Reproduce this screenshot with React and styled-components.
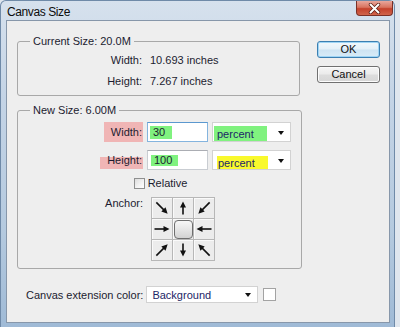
import React from "react";
import styled, { createGlobalStyle } from "styled-components";

const Global = createGlobalStyle`
  html, body { margin: 0; padding: 0; background: #dfe6ee; }
  body {
    font-family: "Liberation Sans", Arial, sans-serif;
    font-size: 11px;
    color: #1c1c30;
  }
`;

const Window = styled.div`
  width: 395px;
  height: 327px;
  box-sizing: border-box;
  display: flex;
  flex-direction: column;
  background: linear-gradient(180deg, #d6e1ed 0%, #c4d4e6 30%, #b5cadf 70%, #9fbad6 100%);
  border: 1px solid #6f8aa8;
  border-bottom: none;
  border-radius: 6px 6px 0 0;
  padding: 0 4px 4px 5px;
`;

const TitleBar = styled.div`
  height: 19px;
  display: flex;
  justify-content: space-between;
  align-items: flex-start;
  flex: none;
`;

const Title = styled.div`
  margin: 5px 0 0 1px;
  line-height: 13px;
  font-size: 12px;
  letter-spacing: -0.4px;
  color: #0c0c0c;
`;

const CloseBtn = styled.div`
  width: 37px;
  height: 15px;
  margin-right: -3px;
  box-sizing: border-box;
  border: 1px solid #7b3026;
  border-top: none;
  border-radius: 0 0 4px 4px;
  background: linear-gradient(180deg, #e8a79c 0%, #d8735f 45%, #c4412b 55%, #d0644b 100%);
  display: flex;
  align-items: center;
  justify-content: center;
`;

const Client = styled.div`
  flex: 1;
  display: flex;
  background: #eeeeee;
  border: 1px solid #8797aa;
`;

const Main = styled.div`
  width: 293px;
  padding: 14px 0 0 10px;
  box-sizing: border-box;
  display: flex;
  flex-direction: column;
`;

const Side = styled.div`
  padding: 20px 0 0 17px;
  display: flex;
  flex-direction: column;
  gap: 8px;
`;

const Group = styled.fieldset`
  margin: ${p => p.$mt || 0}px 0 0 0;
  width: 283px;
  box-sizing: border-box;
  padding: ${p => p.$pad};
  border: 1px solid #a8a8a8;
  border-radius: 3px;
  display: grid;
  grid-template-columns: ${p => p.$cols};
  column-gap: ${p => p.$cgap}px;
  row-gap: ${p => p.$rgap || 0}px;
  align-items: center;
`;

const Legend = styled.legend`
  padding: 0 3px;
  line-height: 13px;
  font-size: 11px;
`;

const Label = styled.div`
  justify-self: end;
  line-height: ${p => p.$lh || 21}px;
  align-self: ${p => (p.$top ? "start" : "center")};
`;

const Value = styled.div`
  line-height: 21px;
`;

const Mark = styled.span`
  display: inline-flex;
  align-items: center;
  box-sizing: border-box;
  width: ${p => p.$w}px;
  height: ${p => p.$h}px;
  padding-left: ${p => p.$pl || 0}px;
  padding-right: ${p => p.$pr || 0}px;
  margin-left: ${p => p.$ml || 0}px;
  justify-content: ${p => (p.$end ? "flex-end" : "flex-start")};
  background: ${p =>
    p.$band
      ? `linear-gradient(to bottom, transparent ${p.$band[0]}px, ${p.$bg} ${p.$band[0]}px, ${p.$bg} ${p.$band[1]}px, transparent ${p.$band[1]}px)`
      : p.$bg};
`;

const TextBox = styled.div`
  height: 20px;
  box-sizing: border-box;
  background: #fff;
  border: 1px solid ${p => (p.$focus ? "#84b4de" : "#c9cdd2")};
  border-top-color: ${p => (p.$focus ? "#5b98cf" : "#abadb3")};
  display: flex;
  align-items: center;
  padding-left: 1px;
`;

const Select = styled.div`
  width: ${p => p.$w}px;
  height: ${p => p.$h}px;
  box-sizing: border-box;
  background: #fff;
  border: 1px solid #d2d2d2;
  display: flex;
  align-items: ${p => (p.$low ? "flex-end" : "center")};
  justify-content: space-between;
  padding: ${p => (p.$low ? "0 6px 0 1px" : "0 6px 0 5px")};
  color: #1c2566;
`;

const Caret = styled.span`
  align-self: center;
  width: 0;
  height: 0;
  border-left: 3.5px solid transparent;
  border-right: 3.5px solid transparent;
  border-top: 4px solid #111;
  margin-top: 1px;
`;

const CheckRow = styled.div`
  grid-column: 1 / -1;
  display: flex;
  justify-content: center;
  align-items: center;
  gap: 3px;
  height: 11px;
  line-height: 11px;
`;

const Check = styled.span`
  width: 11px;
  height: 11px;
  box-sizing: border-box;
  border: 1px solid #8e8f8f;
  background: linear-gradient(135deg, #dcdcdc 0%, #f4f4f4 60%, #fff 100%);
`;

const AnchorGrid = styled.div`
  grid-column: 2 / -1;
  margin-left: 4px;
  align-self: start;
  display: grid;
  grid-template-columns: repeat(3, 20px);
  grid-template-rows: repeat(3, 20px);
  gap: 1px;
  width: max-content;
  background: #b7b7b7;
  border: 1px solid #b7b7b7;
`;

const Cell = styled.div`
  background: #ececec;
  box-shadow: inset 1px 1px 0 #fafafa;
  display: flex;
  align-items: center;
  justify-content: center;
`;

const Knob = styled.div`
  width: 19px;
  height: 19px;
  box-sizing: border-box;
  border: 1px solid #6e6e6e;
  border-radius: 4px;
  background: linear-gradient(180deg, #f7f7f7 0%, #e2e2e2 60%, #d2d2d2 100%);
`;

const ExtRow = styled.div`
  margin: 17px 0 0 9px;
  display: flex;
  align-items: center;
  height: 17px;
`;

const ExtLabel = styled.span`
  margin-right: 3px;
`;

const Swatch = styled.span`
  width: 13px;
  height: 13px;
  box-sizing: border-box;
  margin-left: 5px;
  background: #fff;
  border: 1px solid #a3a3a3;
`;

const Button = styled.div`
  width: 63px;
  height: 17px;
  box-sizing: border-box;
  border: 1px solid ${p => (p.$primary ? "#3c7fb1" : "#707070")};
  border-radius: 3px;
  background: ${p =>
    p.$primary
      ? "linear-gradient(180deg, #f2f8fc 0%, #e4f0f8 48%, #cde3f2 52%, #d9ecf8 100%)"
      : "linear-gradient(180deg, #f6f6f6 0%, #ebebeb 48%, #dddddd 52%, #d6d6d6 100%)"};
  box-shadow: inset 0 0 0 1px ${p => (p.$primary ? "#9fd5f5" : "#fcfcfc")};
  display: flex;
  align-items: center;
  justify-content: center;
  line-height: 15px;
  color: #111;
`;

const Arrow = ({ angle, len = 14 }) => {
  const h = len / 2;
  return (
    <svg width="20" height="20" viewBox="0 0 20 20">
      <g transform={`translate(10 10) rotate(${angle})`}>
        <line x1={-h} y1="0" x2={h - 4} y2="0" stroke="#111" strokeWidth="1.6" />
        <polygon points={`${h},0 ${h - 6},-3 ${h - 6},3`} fill="#111" />
      </g>
    </svg>
  );
};

const CloseIcon = () => (
  <svg width="13" height="11" viewBox="0 0 13 11">
    <path d="M2.5 1.5 L10.5 9.5 M10.5 1.5 L2.5 9.5" stroke="#5a1b12" strokeWidth="3.4" strokeLinecap="round" />
    <path d="M2.5 1.5 L10.5 9.5 M10.5 1.5 L2.5 9.5" stroke="#ffffff" strokeWidth="2" strokeLinecap="round" />
  </svg>
);

const PINK = "#f0b5b5";
const GREEN = "#80f27f";
const YELLOW = "#f9f92c";

const anchors = [
  { a: 45, l: 16 },
  { a: -90, l: 13 },
  { a: 135, l: 16 },
  { a: 0, l: 15 },
  null,
  { a: 180, l: 15 },
  { a: -45, l: 16 },
  { a: 90, l: 13 },
  { a: -135, l: 16 },
];

export default function App() {
  return (
    <>
      <Global />
      <Window>
        <TitleBar>
          <Title>Canvas Size</Title>
          <CloseBtn>
            <CloseIcon />
          </CloseBtn>
        </TitleBar>
        <Client>
          <Main>
            <Group $pad="2px 10px 3px 12px" $cols="112px 1fr" $cgap={8}>
              <Legend>Current Size: 20.0M</Legend>
              <Label>Width:</Label>
              <Value>10.693 inches</Value>
              <Label>Height:</Label>
              <Value>7.267 inches</Value>
            </Group>

            <Group $mt={8} $pad="5px 10px 7px 12px" $cols="113px 61px 79px" $cgap={4} $rgap={8}>
              <Legend>New Size: 6.00M</Legend>
              <Label $lh={20}>
                <Mark $bg={PINK} $w={39} $h={20} $pr={1} $end>Width:</Mark>
              </Label>
              <TextBox $focus>
                <Mark $bg={GREEN} $w={22} $h={13} $pl={3} $ml={1}>30</Mark>
              </TextBox>
              <Select $w={79} $h={20} $low>
                <Mark $bg={GREEN} $w={53} $h={15} $pl={3}>percent</Mark>
                <Caret />
              </Select>

              <Label $lh={20}>
                <Mark $bg={PINK} $w={43} $h={20} $pr={1} $end $band={[7, 19]}>Height:</Mark>
              </Label>
              <TextBox>
                <Mark $bg={GREEN} $w={27} $h={11} $pl={3} $ml={2}>100</Mark>
              </TextBox>
              <Select $w={79} $h={20} $low>
                <Mark $bg={YELLOW} $w={51} $h={13} $pl={1} $ml={3}>percent</Mark>
                <Caret />
              </Select>

              <CheckRow>
                <Check />
                <span>Relative</span>
              </CheckRow>

              <Label $top $lh={12}>Anchor:</Label>
              <AnchorGrid>
                {anchors.map((c, i) => (
                  <Cell key={i}>{c ? <Arrow angle={c.a} len={c.l} /> : <Knob />}</Cell>
                ))}
              </AnchorGrid>
            </Group>

            <ExtRow>
              <ExtLabel>Canvas extension color:</ExtLabel>
              <Select $w={112} $h={17}>
                <span>Background</span>
                <Caret />
              </Select>
              <Swatch />
            </ExtRow>
          </Main>
          <Side>
            <Button $primary>OK</Button>
            <Button>Cancel</Button>
          </Side>
        </Client>
      </Window>
    </>
  );
}
